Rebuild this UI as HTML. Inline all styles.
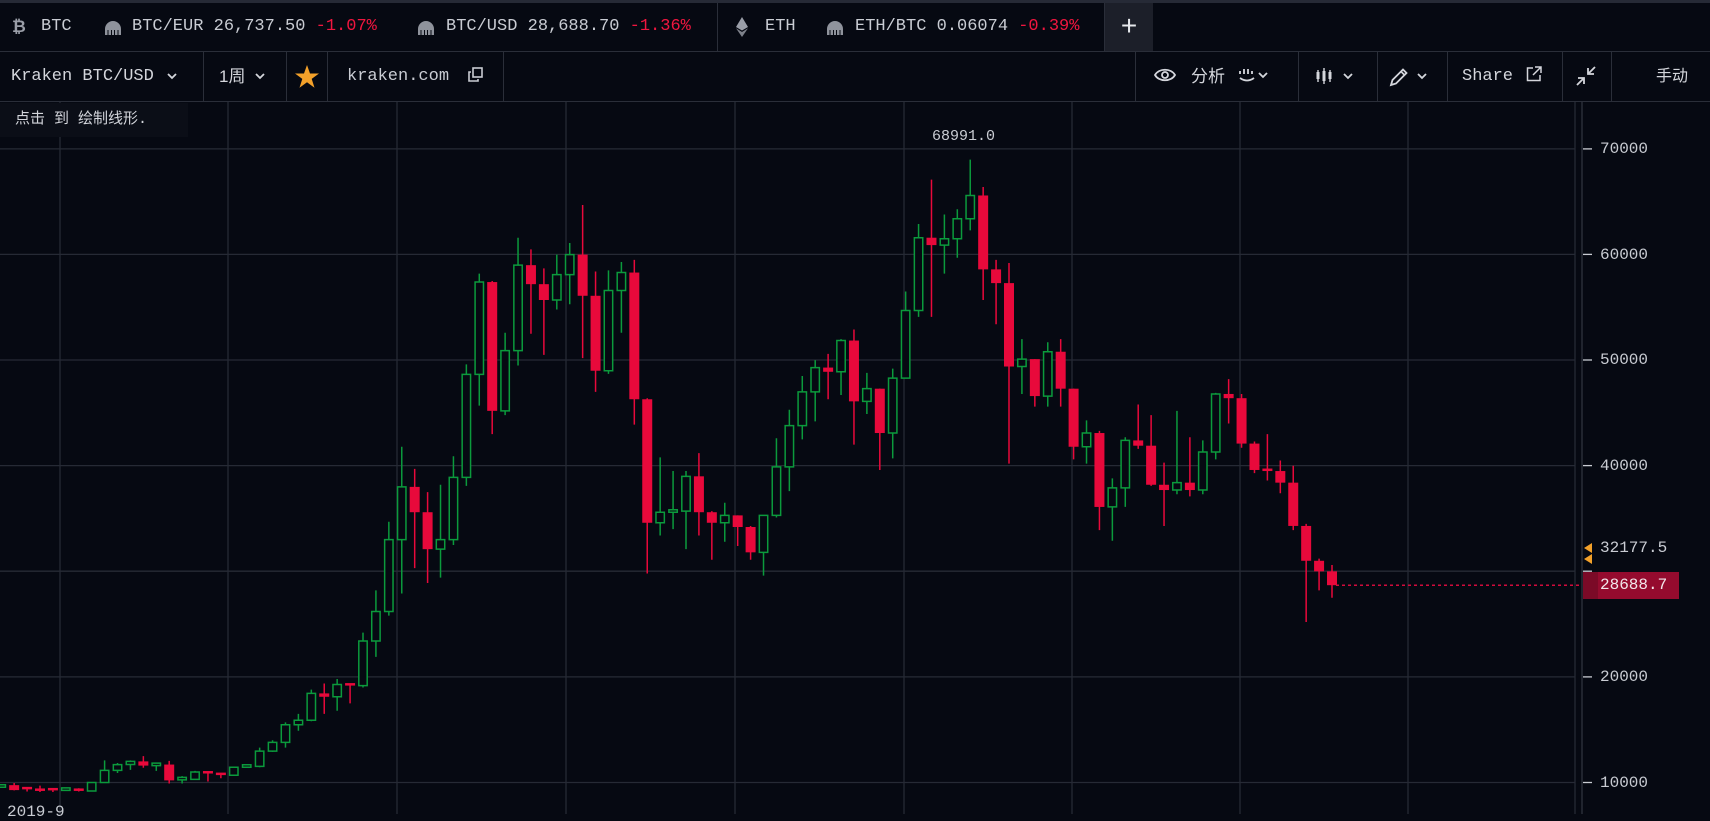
<!DOCTYPE html>
<html><head><meta charset="utf-8">
<style>
*{margin:0;padding:0;box-sizing:border-box}
html,body{width:1710px;height:814px;overflow:hidden;background:#060912;font-family:"Liberation Mono","Noto Sans CJK SC",monospace;color:#c9ccd3}
#chart{position:absolute;left:0;top:0}
.bar1{position:absolute;left:0;top:0;width:1710px;height:52px;background:#060912;border-top:3px solid #262a36;border-bottom:1px solid #2a2e39}
.bar2{position:absolute;left:0;top:52px;width:1710px;height:50px;background:#060912;border-bottom:1px solid #2a2e39}
.t{position:absolute;top:0;height:48px;line-height:48px;font-size:17px;white-space:nowrap;color:#c9ccd3}
.red{color:#f0163f}
.div{position:absolute;top:0;width:1px;height:100%;background:#2a2e39}
.plus{position:absolute;left:1105px;top:0;width:48px;height:48px;background:#1c1f29;color:#e6e8ec;font-size:28px;line-height:46px;text-align:center;font-family:"Liberation Sans",sans-serif}
.t2{position:absolute;top:0;height:49px;line-height:49px;font-size:17px;white-space:nowrap;color:#d4d6dc}
.cjk{font-family:"Liberation Sans","Noto Sans CJK SC",sans-serif}
.tip{position:absolute;left:0;top:103px;width:188px;height:34px;background:#0b0e17;font-size:15px;line-height:34px;padding-left:15px;color:#d4d6dc;font-family:"Liberation Mono","Noto Sans CJK SC",monospace}
.ax{position:absolute;left:1600px;font-size:16px;color:#c9ccd3;height:20px;line-height:20px}
</style></head><body>
<svg id="chart" width="1710" height="814" xmlns="http://www.w3.org/2000/svg">
<g stroke="#262a35" stroke-width="1.3">
<line x1="60" y1="102" x2="60" y2="814"/><line x1="228" y1="102" x2="228" y2="814"/><line x1="397" y1="102" x2="397" y2="814"/><line x1="566" y1="102" x2="566" y2="814"/><line x1="735" y1="102" x2="735" y2="814"/><line x1="904" y1="102" x2="904" y2="814"/><line x1="1072" y1="102" x2="1072" y2="814"/><line x1="1240" y1="102" x2="1240" y2="814"/><line x1="1408" y1="102" x2="1408" y2="814"/>
<line x1="0" y1="148.9" x2="1575" y2="148.9"/><line x1="0" y1="254.4" x2="1575" y2="254.4"/><line x1="0" y1="360" x2="1575" y2="360"/><line x1="0" y1="465.6" x2="1575" y2="465.6"/><line x1="0" y1="571.2" x2="1575" y2="571.2"/><line x1="0" y1="676.9" x2="1575" y2="676.9"/><line x1="0" y1="782.5" x2="1575" y2="782.5"/>
<line x1="1575" y1="102" x2="1575" y2="814"/>
</g>
<line x1="1582" y1="102" x2="1582" y2="814" stroke="#2e323d" stroke-width="1.3"/>
<g stroke="#c9ccd3" stroke-width="1.3">
<line x1="1583" y1="148.9" x2="1592" y2="148.9"/><line x1="1583" y1="254.4" x2="1592" y2="254.4"/><line x1="1583" y1="360" x2="1592" y2="360"/><line x1="1583" y1="465.6" x2="1592" y2="465.6"/><line x1="1583" y1="571.2" x2="1592" y2="571.2"/><line x1="1583" y1="676.9" x2="1592" y2="676.9"/><line x1="1583" y1="782.5" x2="1592" y2="782.5"/>
</g>
<g transform="matrix(12.92 0 0 -0.010558 1.24 888.08)">
<path vector-effect="non-scaling-stroke" stroke="#0b9a3c" stroke-width="1.5" fill="none" d="M0 9500V9800 M5 9200V9400 M7 9150V10050 M8 9950V12100 M9 10900V11850 M10 11200V12100 M12 11100V11700 M14 9900V10600 M15 10250V11100 M18 10650V11500 M19 11400V11550 M20 11450V13300 M21 12900V14000 M22 13300V15700 M23 14900V16500 M24 15800V18800 M26 16800V19800 M28 19000V24200 M29 21900V28200 M30 25800V34700 M31 27900V41800 M34 29400V38200 M35 32500V40900 M36 38100V49600 M37 45700V58200 M39 44800V52600 M40 49500V61600 M43 54800V60000 M44 55300V61100 M47 48700V58500 M48 52600V59300 M51 33400V40800 M52 34000V39500 M53 32100V39500 M56 32800V36500 M59 29600V35300 M60 35100V42600 M61 37600V45300 M62 42500V48500 M63 44200V50000 M65 46700V52000 M67 44900V48800 M69 40700V49200 M70 48600V56500 M71 54100V62900 M73 58200V63800 M74 59700V64300 M75 62300V69000 M79 46800V52000 M81 45600V51700 M84 40200V44300 M86 32900V38800 M87 36100V42700 M91 37300V45200 M93 37300V42400 M94 40600V46900"/>
<path vector-effect="non-scaling-stroke" stroke="#e8093b" stroke-width="1.5" fill="none" d="M1 9250V9950 M2 9150V9550 M3 9100V9700 M4 9100V9400 M6 9150V9450 M11 11400V12500 M13 9900V12050 M16 10100V11050 M17 10400V10900 M25 16500V19380 M27 17500V19280 M32 30300V39700 M33 28900V37500 M38 43000V57500 M41 52500V60500 M42 50500V58700 M45 50200V64700 M46 47000V58400 M49 43900V59500 M50 29800V46400 M54 33400V41200 M55 31100V35700 M57 32400V35300 M58 31100V34300 M64 46300V50600 M66 42000V52900 M68 39600V47300 M72 54100V67100 M76 55700V66400 M77 53400V59500 M78 40200V59200 M80 45600V50100 M82 45600V52000 M83 40600V47300 M85 33900V43300 M88 41600V45800 M89 38100V44800 M90 34300V40300 M92 37100V42700 M95 44000V48200 M96 41700V46800 M97 39300V42300 M98 38600V43000 M99 37400V40500 M100 33900V40000 M101 25200V34500 M102 28200V31200 M103 27500V30600"/>
<g fill="#060912" stroke="#0b9a3c" stroke-width="1.5">
<rect vector-effect="non-scaling-stroke" x="-0.325" y="9550" width="0.65" height="237"/>
<rect vector-effect="non-scaling-stroke" x="4.675" y="9250" width="0.65" height="237"/>
<rect vector-effect="non-scaling-stroke" x="6.675" y="9190" width="0.65" height="810"/>
<rect vector-effect="non-scaling-stroke" x="7.675" y="10000" width="0.65" height="1150"/>
<rect vector-effect="non-scaling-stroke" x="8.675" y="11150" width="0.65" height="540"/>
<rect vector-effect="non-scaling-stroke" x="9.675" y="11700" width="0.65" height="300"/>
<rect vector-effect="non-scaling-stroke" x="11.675" y="11600" width="0.65" height="237"/>
<rect vector-effect="non-scaling-stroke" x="13.675" y="10250" width="0.65" height="237"/>
<rect vector-effect="non-scaling-stroke" x="14.675" y="10300" width="0.65" height="700"/>
<rect vector-effect="non-scaling-stroke" x="17.675" y="10690" width="0.65" height="750"/>
<rect vector-effect="non-scaling-stroke" x="18.675" y="11440" width="0.65" height="237"/>
<rect vector-effect="non-scaling-stroke" x="19.675" y="11530" width="0.65" height="1440"/>
<rect vector-effect="non-scaling-stroke" x="20.675" y="12970" width="0.65" height="830"/>
<rect vector-effect="non-scaling-stroke" x="21.675" y="13800" width="0.65" height="1670"/>
<rect vector-effect="non-scaling-stroke" x="22.675" y="15470" width="0.65" height="430"/>
<rect vector-effect="non-scaling-stroke" x="23.675" y="15900" width="0.65" height="2540"/>
<rect vector-effect="non-scaling-stroke" x="25.675" y="18120" width="0.65" height="1160"/>
<rect vector-effect="non-scaling-stroke" x="27.675" y="19180" width="0.65" height="4220"/>
<rect vector-effect="non-scaling-stroke" x="28.675" y="23400" width="0.65" height="2800"/>
<rect vector-effect="non-scaling-stroke" x="29.675" y="26200" width="0.65" height="6800"/>
<rect vector-effect="non-scaling-stroke" x="30.675" y="33000" width="0.65" height="5000"/>
<rect vector-effect="non-scaling-stroke" x="33.675" y="32100" width="0.65" height="900"/>
<rect vector-effect="non-scaling-stroke" x="34.675" y="33000" width="0.65" height="5900"/>
<rect vector-effect="non-scaling-stroke" x="35.675" y="38900" width="0.65" height="9760"/>
<rect vector-effect="non-scaling-stroke" x="36.675" y="48660" width="0.65" height="8740"/>
<rect vector-effect="non-scaling-stroke" x="38.675" y="45200" width="0.65" height="5700"/>
<rect vector-effect="non-scaling-stroke" x="39.675" y="50900" width="0.65" height="8100"/>
<rect vector-effect="non-scaling-stroke" x="42.675" y="55700" width="0.65" height="2400"/>
<rect vector-effect="non-scaling-stroke" x="43.675" y="58100" width="0.65" height="1900"/>
<rect vector-effect="non-scaling-stroke" x="46.675" y="49000" width="0.65" height="7600"/>
<rect vector-effect="non-scaling-stroke" x="47.675" y="56600" width="0.65" height="1700"/>
<rect vector-effect="non-scaling-stroke" x="50.675" y="34600" width="0.65" height="1000"/>
<rect vector-effect="non-scaling-stroke" x="51.675" y="35600" width="0.65" height="237"/>
<rect vector-effect="non-scaling-stroke" x="52.675" y="35700" width="0.65" height="3300"/>
<rect vector-effect="non-scaling-stroke" x="55.675" y="34600" width="0.65" height="700"/>
<rect vector-effect="non-scaling-stroke" x="58.675" y="31800" width="0.65" height="3500"/>
<rect vector-effect="non-scaling-stroke" x="59.675" y="35300" width="0.65" height="4600"/>
<rect vector-effect="non-scaling-stroke" x="60.675" y="39900" width="0.65" height="3900"/>
<rect vector-effect="non-scaling-stroke" x="61.675" y="43800" width="0.65" height="3200"/>
<rect vector-effect="non-scaling-stroke" x="62.675" y="47000" width="0.65" height="2300"/>
<rect vector-effect="non-scaling-stroke" x="64.675" y="48900" width="0.65" height="2960"/>
<rect vector-effect="non-scaling-stroke" x="66.675" y="46100" width="0.65" height="1200"/>
<rect vector-effect="non-scaling-stroke" x="68.675" y="43100" width="0.65" height="5200"/>
<rect vector-effect="non-scaling-stroke" x="69.675" y="48300" width="0.65" height="6400"/>
<rect vector-effect="non-scaling-stroke" x="70.675" y="54700" width="0.65" height="6900"/>
<rect vector-effect="non-scaling-stroke" x="72.675" y="60900" width="0.65" height="600"/>
<rect vector-effect="non-scaling-stroke" x="73.675" y="61500" width="0.65" height="1900"/>
<rect vector-effect="non-scaling-stroke" x="74.675" y="63400" width="0.65" height="2200"/>
<rect vector-effect="non-scaling-stroke" x="78.675" y="49400" width="0.65" height="700"/>
<rect vector-effect="non-scaling-stroke" x="80.675" y="46600" width="0.65" height="4200"/>
<rect vector-effect="non-scaling-stroke" x="83.675" y="41800" width="0.65" height="1300"/>
<rect vector-effect="non-scaling-stroke" x="85.675" y="36100" width="0.65" height="1800"/>
<rect vector-effect="non-scaling-stroke" x="86.675" y="37900" width="0.65" height="4500"/>
<rect vector-effect="non-scaling-stroke" x="90.675" y="37700" width="0.65" height="700"/>
<rect vector-effect="non-scaling-stroke" x="92.675" y="37700" width="0.65" height="3600"/>
<rect vector-effect="non-scaling-stroke" x="93.675" y="41300" width="0.65" height="5500"/>
</g>
<g fill="#e8093b">
<rect x="0.613" y="9280" width="0.774" height="470"/>
<rect x="1.613" y="9350" width="0.774" height="237"/>
<rect x="2.613" y="9200" width="0.774" height="237"/>
<rect x="3.613" y="9250" width="0.774" height="237"/>
<rect x="5.613" y="9200" width="0.774" height="237"/>
<rect x="10.613" y="11600" width="0.774" height="400"/>
<rect x="12.613" y="10200" width="0.774" height="1500"/>
<rect x="15.613" y="10850" width="0.774" height="237"/>
<rect x="16.613" y="10700" width="0.774" height="237"/>
<rect x="24.613" y="18120" width="0.774" height="320"/>
<rect x="26.613" y="19180" width="0.774" height="237"/>
<rect x="31.613" y="35600" width="0.774" height="2400"/>
<rect x="32.613" y="32100" width="0.774" height="3500"/>
<rect x="37.613" y="45200" width="0.774" height="12200"/>
<rect x="40.613" y="57200" width="0.774" height="1800"/>
<rect x="41.613" y="55700" width="0.774" height="1500"/>
<rect x="44.613" y="56100" width="0.774" height="3900"/>
<rect x="45.613" y="49000" width="0.774" height="7100"/>
<rect x="48.613" y="46300" width="0.774" height="12000"/>
<rect x="49.613" y="34600" width="0.774" height="11700"/>
<rect x="53.613" y="35600" width="0.774" height="3400"/>
<rect x="54.613" y="34600" width="0.774" height="1000"/>
<rect x="56.613" y="34200" width="0.774" height="1100"/>
<rect x="57.613" y="31800" width="0.774" height="2400"/>
<rect x="63.613" y="48900" width="0.774" height="400"/>
<rect x="65.613" y="46100" width="0.774" height="5760"/>
<rect x="67.613" y="43100" width="0.774" height="4200"/>
<rect x="71.613" y="60900" width="0.774" height="700"/>
<rect x="75.613" y="58600" width="0.774" height="7000"/>
<rect x="76.613" y="57300" width="0.774" height="1300"/>
<rect x="77.613" y="49400" width="0.774" height="7900"/>
<rect x="79.613" y="46600" width="0.774" height="3500"/>
<rect x="81.613" y="47300" width="0.774" height="3500"/>
<rect x="82.613" y="41800" width="0.774" height="5500"/>
<rect x="84.613" y="36100" width="0.774" height="7000"/>
<rect x="87.613" y="41900" width="0.774" height="500"/>
<rect x="88.613" y="38200" width="0.774" height="3700"/>
<rect x="89.613" y="37700" width="0.774" height="500"/>
<rect x="91.613" y="37700" width="0.774" height="700"/>
<rect x="94.613" y="46400" width="0.774" height="400"/>
<rect x="95.613" y="42100" width="0.774" height="4300"/>
<rect x="96.613" y="39600" width="0.774" height="2500"/>
<rect x="97.613" y="39500" width="0.774" height="237"/>
<rect x="98.613" y="38400" width="0.774" height="1100"/>
<rect x="99.613" y="34300" width="0.774" height="4100"/>
<rect x="100.613" y="31000" width="0.774" height="3300"/>
<rect x="101.613" y="30000" width="0.774" height="1000"/>
<rect x="102.613" y="28688" width="0.774" height="1312"/>
</g>
</g>
<line x1="1336" y1="585.2" x2="1582" y2="585.2" stroke="#d20b3c" stroke-width="1.5" stroke-dasharray="3,3"/>
<path d="M1592 543l-8 5 8 5z" fill="#f3a12a"/><path d="M1592 554l-8 5 8 5z" fill="#f3a12a"/>
</svg>

<div class="bar1">
  <div class="t" style="left:12px;color:#9a9ea8;font-family:'DejaVu Sans',sans-serif;font-weight:bold;font-size:17px">₿</div>
  <div class="t" style="left:41px">BTC</div>
  <svg style="position:absolute;left:104px;top:17px" width="18" height="16" viewBox="0 0 18 16"><path d="M1 15V9a8 8 0 0 1 16 0v6h-2.5V10h-1v5H11V10h-1v5H8V10H7v5H4.5V10h-1v5z" fill="#8f939c"/></svg>
  <div class="t" style="left:132px">BTC/EUR 26,737.50 <span class="red">-1.07%</span></div>
  <svg style="position:absolute;left:417px;top:17px" width="18" height="16" viewBox="0 0 18 16"><path d="M1 15V9a8 8 0 0 1 16 0v6h-2.5V10h-1v5H11V10h-1v5H8V10H7v5H4.5V10h-1v5z" fill="#8f939c"/></svg>
  <div class="t" style="left:446px">BTC/USD 28,688.70 <span class="red">-1.36%</span></div>
  <div class="div" style="left:717px"></div>
  <svg style="position:absolute;left:736px;top:14px" width="12" height="20" viewBox="0 0 12 20"><path d="M6 0L0 10l6 3.5L12 10z" fill="#9a9ea8"/><path d="M6 15L0 11.2 6 20l6-8.8z" fill="#7d818a"/></svg>
  <div class="t" style="left:765px">ETH</div>
  <svg style="position:absolute;left:826px;top:17px" width="18" height="16" viewBox="0 0 18 16"><path d="M1 15V9a8 8 0 0 1 16 0v6h-2.5V10h-1v5H11V10h-1v5H8V10H7v5H4.5V10h-1v5z" fill="#8f939c"/></svg>
  <div class="t" style="left:855px">ETH/BTC 0.06074 <span class="red">-0.39%</span></div>
  <div class="div" style="left:1104px"></div>
  <div class="plus">+</div>
</div>

<div class="bar2">
  <div class="t2" style="left:11px">Kraken BTC/USD</div>
  <svg style="position:absolute;left:166px;top:20px" width="12" height="8" viewBox="0 0 12 8"><path d="M2 2l4 4 4-4" stroke="#d4d6dc" stroke-width="1.8" fill="none"/></svg>
  <div class="div" style="left:203px"></div>
  <div class="t2 cjk" style="left:219px">1周</div>
  <svg style="position:absolute;left:254px;top:20px" width="12" height="8" viewBox="0 0 12 8"><path d="M2 2l4 4 4-4" stroke="#d4d6dc" stroke-width="1.8" fill="none"/></svg>
  <div class="div" style="left:286px"></div>
  <svg style="position:absolute;left:295px;top:13px" width="24" height="23" viewBox="0 0 24 23"><path d="M12 0l3 8.5h9l-7.3 5.4 2.8 8.8L12 17.3 4.5 22.7l2.8-8.8L0 8.5h9z" fill="#f3a12a"/></svg>
  <div class="div" style="left:327px"></div>
  <div class="t2" style="left:347px;color:#c9ccd3">kraken.com</div>
  <svg style="position:absolute;left:468px;top:15px" width="15" height="15" viewBox="0 0 15 15"><rect x="5" y="1" width="9" height="9" fill="none" stroke="#c9ccd3" stroke-width="1.6"/><path d="M3 5H1v9h9v-2" fill="none" stroke="#c9ccd3" stroke-width="1.6"/></svg>
  <div class="div" style="left:503px"></div>

  <div class="div" style="left:1135px"></div>
  <svg style="position:absolute;left:1154px;top:15px" width="22" height="16" viewBox="0 0 22 16"><path d="M1 8C5 1 17 1 21 8 17 15 5 15 1 8z" fill="none" stroke="#d4d6dc" stroke-width="1.8"/><circle cx="11" cy="8" r="3" fill="none" stroke="#d4d6dc" stroke-width="1.8"/></svg>
  <div class="t2 cjk" style="left:1191px">分析</div>
  <svg style="position:absolute;left:1238px;top:16px" width="34" height="16" viewBox="0 0 34 16"><path d="M2 3v3M6 1v5M10 1v5M14 3v3M2 10q7 5 14 0" stroke="#d4d6dc" stroke-width="1.8" fill="none"/><path d="M21 5l4 4 4-4" stroke="#d4d6dc" stroke-width="1.8" fill="none"/></svg>
  <div class="div" style="left:1298px"></div>
  <svg style="position:absolute;left:1316px;top:14px" width="44" height="20" viewBox="0 0 44 20"><path d="M2 4v12M8 2v16M14 4v12" stroke="#d4d6dc" stroke-width="1.4"/><rect x="0.5" y="6" width="3" height="7" fill="#d4d6dc"/><rect x="6.5" y="5" width="3" height="10" fill="#d4d6dc"/><rect x="12.5" y="6" width="3" height="7" fill="#d4d6dc"/><path d="M28 8l4 4 4-4" stroke="#d4d6dc" stroke-width="1.8" fill="none"/></svg>
  <div class="div" style="left:1377px"></div>
  <svg style="position:absolute;left:1388px;top:14px" width="44" height="22" viewBox="0 0 44 22"><path d="M3 19l1.5-5L15 3.5l3.5 3.5L8 17.5z" fill="none" stroke="#d4d6dc" stroke-width="1.8"/><path d="M13 5.5l3.5 3.5" stroke="#d4d6dc" stroke-width="1.6"/><path d="M30 8l4 4 4-4" stroke="#d4d6dc" stroke-width="1.8" fill="none"/></svg>
  <div class="div" style="left:1447px"></div>
  <div class="t2" style="left:1462px">Share</div>
  <svg style="position:absolute;left:1526px;top:14px" width="16" height="16" viewBox="0 0 16 16"><path d="M7 2H1.5v12.5H14V9" fill="none" stroke="#d4d6dc" stroke-width="1.5"/><path d="M9 1h6v6M15 1L7 9" fill="none" stroke="#d4d6dc" stroke-width="1.5"/></svg>
  <div class="div" style="left:1562px"></div>
  <svg style="position:absolute;left:1575px;top:13px" width="22" height="22" viewBox="0 0 22 22"><path d="M14 8l6-6M13 3v6h6" stroke="#d4d6dc" stroke-width="1.8" fill="none"/><path d="M8 14l-6 6M9 19v-6H3" stroke="#d4d6dc" stroke-width="1.8" fill="none"/></svg>
  <div class="div" style="left:1611px"></div>
  <div class="t2 cjk" style="left:1656px;font-size:16px">手动</div>
</div>

<div class="tip">点击 到 绘制线形.</div>
<div style="position:absolute;left:932px;top:128px;font-size:15px;color:#c9ccd3">68991.0</div>

<div class="ax" style="top:139px">70000</div>
<div class="ax" style="top:245px">60000</div>
<div class="ax" style="top:350px">50000</div>
<div class="ax" style="top:456px">40000</div>
<div class="ax" style="top:538px">32177.5</div>
<div style="position:absolute;left:1583px;top:572px;width:96px;height:27px;background:#950b2e"></div>
<div style="position:absolute;left:1583px;top:572px;width:15px;height:27px;background:#7b0a27"></div>
<div class="ax" style="top:575px;color:#f2e6ea">28688.7</div>
<div class="ax" style="top:667px">20000</div>
<div class="ax" style="top:773px">10000</div>
<div style="position:absolute;left:7px;top:803px;font-size:16px;color:#c9ccd3">2019-9</div>
</body></html>
